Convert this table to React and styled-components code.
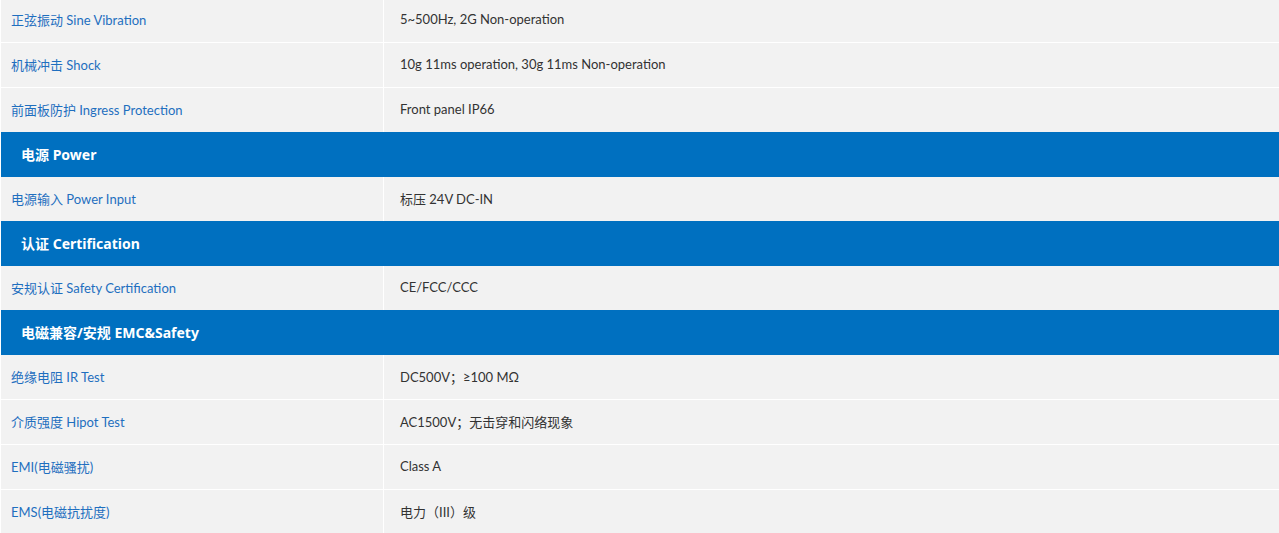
import React from "react";
import styled, { createGlobalStyle } from "styled-components";

const Global = createGlobalStyle`
  html, body { margin: 0; padding: 0; background: #ffffff; overflow: hidden; }
  body { font-family: "Noto Sans", "Noto Sans CJK SC", sans-serif; }
`;

const Table = styled.div`
  display: flex;
  flex-direction: column;
  margin-top: -2px;
  padding-left: 1px;
  background: #ffffff;
`;

const Row = styled.div`
  display: grid;
  grid-template-columns: 382px 1fr;
  column-gap: 1px;
  height: 44px;
  & + & { border-top: 1px solid #ffffff; }
`;

const Cell = styled.div`
  display: flex;
  align-items: center;
  box-sizing: border-box;
  padding-bottom: 2px;
  background: #f2f2f2;
  font-family: "Lato", "Noto Sans CJK SC", sans-serif;
  font-size: 13px;
  padding-left: ${(p) => (p.$label ? "10px" : "16px")};
  color: ${(p) => (p.$label ? "#1f6fbf" : "#333333")};
  white-space: nowrap;
`;

const Header = styled.div`
  display: flex;
  align-items: center;
  height: 45px;
  background: #0070c0;
  color: #ffffff;
  font-weight: 700;
  font-size: 14px;
  padding-left: 20px;
  padding-bottom: 1px;
  box-sizing: border-box;
`;

const data = [
  { t: "row", k: "正弦振动 Sine Vibration", v: "5~500Hz, 2G Non-operation" },
  { t: "row", k: "机械冲击 Shock", v: "10g 11ms operation, 30g 11ms Non-operation" },
  { t: "row", k: "前面板防护 Ingress Protection", v: "Front panel IP66" },
  { t: "head", k: "电源 Power" },
  { t: "row", k: "电源输入 Power Input", v: "标压 24V DC-IN" },
  { t: "head", k: "认证 Certification" },
  { t: "row", k: "安规认证 Safety Certification", v: "CE/FCC/CCC" },
  { t: "head", k: "电磁兼容/安规 EMC&Safety" },
  { t: "row", k: "绝缘电阻 IR Test", v: "DC500V；≥100 MΩ" },
  { t: "row", k: "介质强度 Hipot Test", v: "AC1500V；无击穿和闪络现象" },
  { t: "row", k: "EMI(电磁骚扰)", v: "Class A" },
  { t: "row", k: "EMS(电磁抗扰度)", v: "电力（III）级" },
];

export default function App() {
  return (
    <>
      <Global />
      <Table>
        {data.map((d, i) =>
          d.t === "head" ? (
            <Header key={i}>{d.k}</Header>
          ) : (
            <Row key={i}>
              <Cell $label>{d.k}</Cell>
              <Cell>{d.v}</Cell>
            </Row>
          )
        )}
      </Table>
    </>
  );
}
